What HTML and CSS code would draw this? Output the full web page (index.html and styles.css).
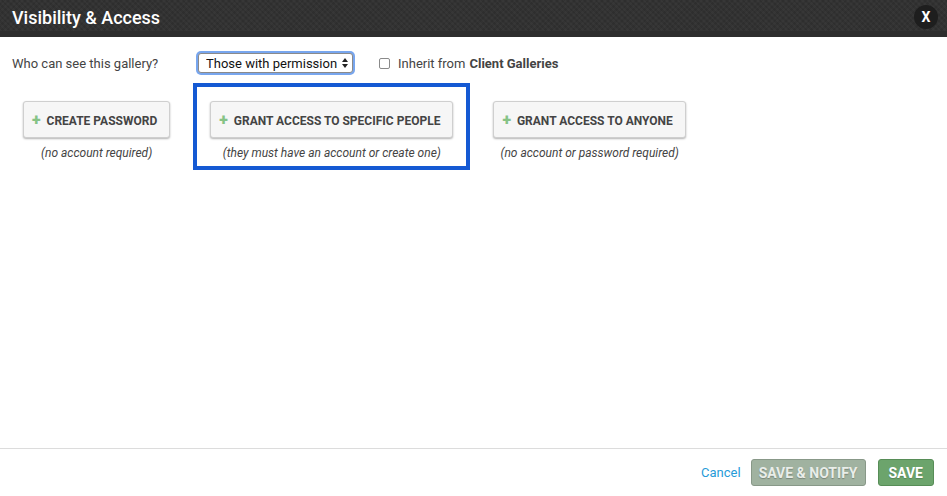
FILE: index.html
```html
<!DOCTYPE html>
<html lang="en">

<head>
    <meta charset="UTF-8">
    <meta name="viewport" content="width=device-width, initial-scale=1.0">
    <title>Visibility &amp; Access</title>
    <link rel="stylesheet" href="styles.css">
</head>

<body>
    <div class="modal">
        <div class="modal-header">
            <h2>Visibility &amp; Access</h2>
            <button class="close-btn">X</button>
        </div>

        <div class="modal-body">
            <div class="who-row">
                <label class="who-label">Who can see this gallery?</label>
                <span class="select-wrap">
                    <select class="who-select">
                        <option>Those with permission</option>
                    </select>
                    <span class="select-arrows">
                        <svg width="6" height="10" viewBox="0 0 6 10">
                            <path d="M0 4 L3 0 L6 4 Z" fill="#222" />
                            <path d="M0 6 L3 10 L6 6 Z" fill="#222" />
                        </svg>
                    </span>
                </span>
                <label class="inherit">
                    <span class="checkbox"></span>
                    Inherit from <b>Client Galleries</b>
                </label>
            </div>

            <div class="options">
                <div class="option">
                    <button class="option-btn"><span class="plus">+</span>Create Password</button>
                    <p class="option-note">(no account required)</p>
                </div>
                <div class="option selected">
                    <button class="option-btn"><span class="plus">+</span>Grant Access to Specific People</button>
                    <p class="option-note">(they must have an account or create one)</p>
                </div>
                <div class="option">
                    <button class="option-btn"><span class="plus">+</span>Grant Access to Anyone</button>
                    <p class="option-note">(no account or password required)</p>
                </div>
            </div>
        </div>

        <div class="modal-footer">
            <a href="#" class="cancel">Cancel</a>
            <button class="footer-btn notify">Save &amp; Notify</button>
            <button class="footer-btn save">Save</button>
        </div>
    </div>
</body>

</html>
```

FILE: styles.css
```css
body {
    font-family: Roboto, "Liberation Sans", Arial, sans-serif;
    margin: 0;
    padding: 0;
    background-color: #fff;
    color: #444;
}

.modal {
    display: flex;
    flex-direction: column;
    height: 100vh;
}

.modal-header {
    display: flex;
    justify-content: space-between;
    align-items: center;
    height: 31px;
    padding: 0 9px 0 12px;
    background-color: #323232;
    background-image: repeating-linear-gradient(45deg, rgba(255, 255, 255, 0.025) 0 2px, transparent 2px 4px),
        repeating-linear-gradient(-45deg, rgba(0, 0, 0, 0.08) 0 2px, transparent 2px 4px);
    border-bottom: 6px solid #2d2d2d;
}

.modal-header h2 {
    margin: 4px 0 0;
    color: #fff;
    font-size: 18px;
    font-weight: 500;
}

.close-btn {
    width: 24px;
    height: 24px;
    margin-top: 3px;
    border: none;
    border-radius: 50%;
    background-color: #1e1e1e;
    color: #fff;
    font-family: inherit;
    font-size: 14px;
    font-weight: bold;
    padding: 0;
    cursor: pointer;
}

.modal-body {
    flex: 1;
    padding: 16px 12px 0;
}

.who-row {
    display: flex;
    align-items: center;
    font-size: 13px;
}

.who-label {
    color: #444;
    width: 186px;
}

.select-wrap {
    position: relative;
    display: inline-block;
}

.who-select {
    appearance: none;
    -webkit-appearance: none;
    width: 155px;
    height: 20px;
    padding: 0 12px 0 7px;
    border: 1px solid #8a8a8a;
    border-radius: 3px;
    background-color: #fff;
    box-shadow: 0 0 0 2px #78a6ee;
    font-family: inherit;
    font-size: 13px;
    color: #111;
    outline: none;
}

.select-arrows {
    position: absolute;
    right: 5px;
    top: 5px;
    pointer-events: none;
    line-height: 0;
}

.inherit {
    display: flex;
    align-items: center;
    margin-left: 26px;
    color: #444;
}

.inherit b {
    margin-left: 4px;
}

.checkbox {
    width: 9px;
    height: 9px;
    border: 1px solid #8a8a8a;
    border-radius: 2px;
    margin-right: 8px;
}

.options {
    display: flex;
    align-items: flex-start;
    gap: 6px;
    margin-top: 10px;
    margin-left: -6px;
}

.option {
    border: 4px solid transparent;
    padding: 14px 13px 6px;
    text-align: center;
}

.option.selected {
    border-color: #1559d3;
}

.option-btn {
    height: 37px;
    padding: 0 12px 0 8px;
    border: 1px solid #cfcfcf;
    border-radius: 3px;
    background-color: #f6f6f6;
    box-shadow: 0 1px 2px rgba(0, 0, 0, 0.3);
    font-family: inherit;
    font-size: 12px;
    font-weight: bold;
    text-transform: uppercase;
    color: #444;
    cursor: pointer;
}

.plus {
    color: #86c386;
    font-size: 16px;
    font-weight: 900;
    margin-right: 6px;
}

.option-note {
    margin: 8px 0 0;
    font-size: 12px;
    font-style: italic;
    color: #444;
}

.modal-footer {
    display: flex;
    justify-content: flex-end;
    align-items: center;
    height: 47px;
    padding: 0 13px;
    border-top: 1px solid #dcdcdc;
}

.cancel {
    color: #279bd8;
    text-decoration: none;
    font-size: 13px;
    margin-right: 10px;
}

.footer-btn {
    height: 27px;
    padding: 0 7px;
    border-radius: 3px;
    font-family: inherit;
    font-size: 14px;
    font-weight: bold;
    text-transform: uppercase;
    cursor: pointer;
}

.notify {
    background-color: #a0b2a0;
    border: 1px solid #889888;
    color: #e9ede9;
    text-shadow: 0 1px 1px rgba(0, 0, 0, 0.25);
}

.save {
    margin-left: 12px;
    padding: 0 10px;
    background-color: #6ca46c;
    border: 1px solid #578d57;
    color: #fff;
    text-shadow: 0 1px 1px rgba(0, 0, 0, 0.2);
}
```
